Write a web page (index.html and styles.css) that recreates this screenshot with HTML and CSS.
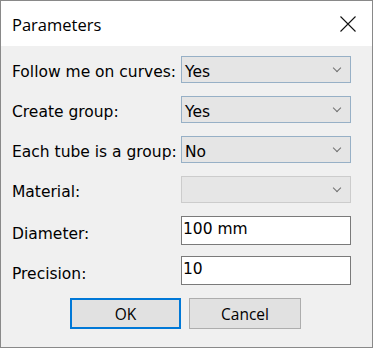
FILE: index.html
```html
<!DOCTYPE html>
<html>
  <head>
    <meta charset="UTF-8">
    <title>Parameters</title>
    <link rel="stylesheet" href="styles.css">
  </head>
  <body>
    <div class="window">
      <div class="title-bar">
        <span class="title">Parameters</span>
        <svg class="close" width="16" height="16" viewBox="0 0 16 16">
          <path d="M0.5 0.5 L15.5 15.5 M15.5 0.5 L0.5 15.5" stroke="#111" stroke-width="1.1" fill="none"/>
        </svg>
      </div>
      <div class="content">
        <div class="row">
          <label>Follow me on curves:</label>
          <div class="combo"><span>Yes</span><i class="chevron"></i></div>
        </div>
        <div class="row">
          <label>Create group:</label>
          <div class="combo"><span>Yes</span><i class="chevron"></i></div>
        </div>
        <div class="row">
          <label>Each tube is a group:</label>
          <div class="combo"><span>No</span><i class="chevron"></i></div>
        </div>
        <div class="row">
          <label>Material:</label>
          <div class="combo disabled"><span></span><i class="chevron"></i></div>
        </div>
        <div class="row field-row">
          <label>Diameter:</label>
          <input class="field" type="text" value="100 mm">
        </div>
        <div class="row field-row last">
          <label>Precision:</label>
          <input class="field" type="text" value="10">
        </div>
        <div class="buttons">
          <button class="btn default">OK</button>
          <button class="btn cancel">Cancel</button>
        </div>
      </div>
    </div>
  </body>
</html>
```

FILE: styles.css
```css
body {
  margin: 0;
  background: #f0f0f0;
}
.window {
  width: 373px;
  height: 348px;
  box-sizing: border-box;
  border: 1px solid #898989;
  background: #f0f0f0;
  font-family: "DejaVu Sans", sans-serif;
  font-size: 15.5px;
  color: #000;
}
.title-bar {
  height: 45px;
  background: #fff;
  display: flex;
  align-items: center;
  padding-left: 11px;
  padding-right: 16px;
}
.title {
  flex-grow: 1;
  font-family: "Open Sans", sans-serif;
  font-size: 16.5px;
  padding-top: 2px;
}
.close {
  display: block;
  margin-top: 1px;
}
.content {
  padding: 10px 0 0 11px;
}
.row {
  display: flex;
  align-items: center;
  height: 27px;
  margin-bottom: 13px;
}
.row label {
  width: 169px;
  padding-top: 4px;
  white-space: nowrap;
}
.combo {
  width: 170px;
  height: 27px;
  box-sizing: border-box;
  border: 1px solid #97b0c6;
  background: #e5e5e5;
  display: flex;
  align-items: center;
  padding-left: 3px;
  padding-right: 10px;
}
.combo span {
  flex-grow: 1;
  padding-top: 4px;
}
.combo.disabled {
  border-color: #cccccc;
  background: #e6e6e6;
}
.chevron {
  width: 5px;
  height: 5px;
  border-right: 1px solid #707070;
  border-bottom: 1px solid #707070;
  transform: rotate(45deg);
  margin-top: -3px;
}
.field-row {
  height: 29px;
}
.field-row.last {
  margin-bottom: 13px;
}
.field-row label {
  padding-top: 6px;
}
.row.field-row:not(.last) {
  margin-bottom: 11px;
}
.field {
  width: 170px;
  height: 29px;
  box-sizing: border-box;
  border: 1px solid #7a7a7a;
  background: #fff;
  font-family: "DejaVu Sans", sans-serif;
  font-size: 15.5px;
  color: #000;
  padding: 0 0 3px 1px;
  margin: 0;
  outline: none;
}
.buttons {
  display: flex;
  justify-content: center;
  gap: 8px;
  margin-left: -11px;
  padding-right: 2px;
}
.btn {
  height: 31px;
  box-sizing: border-box;
  background: #e1e1e1;
  font-family: "Open Sans", sans-serif;
  font-size: 15.5px;
  color: #000;
  padding: 0;
  margin: 0;
}
.btn.default {
  width: 111px;
  border: 2px solid #0078d7;
}
.btn.cancel {
  width: 112px;
  border: 1px solid #adadad;
}
```
